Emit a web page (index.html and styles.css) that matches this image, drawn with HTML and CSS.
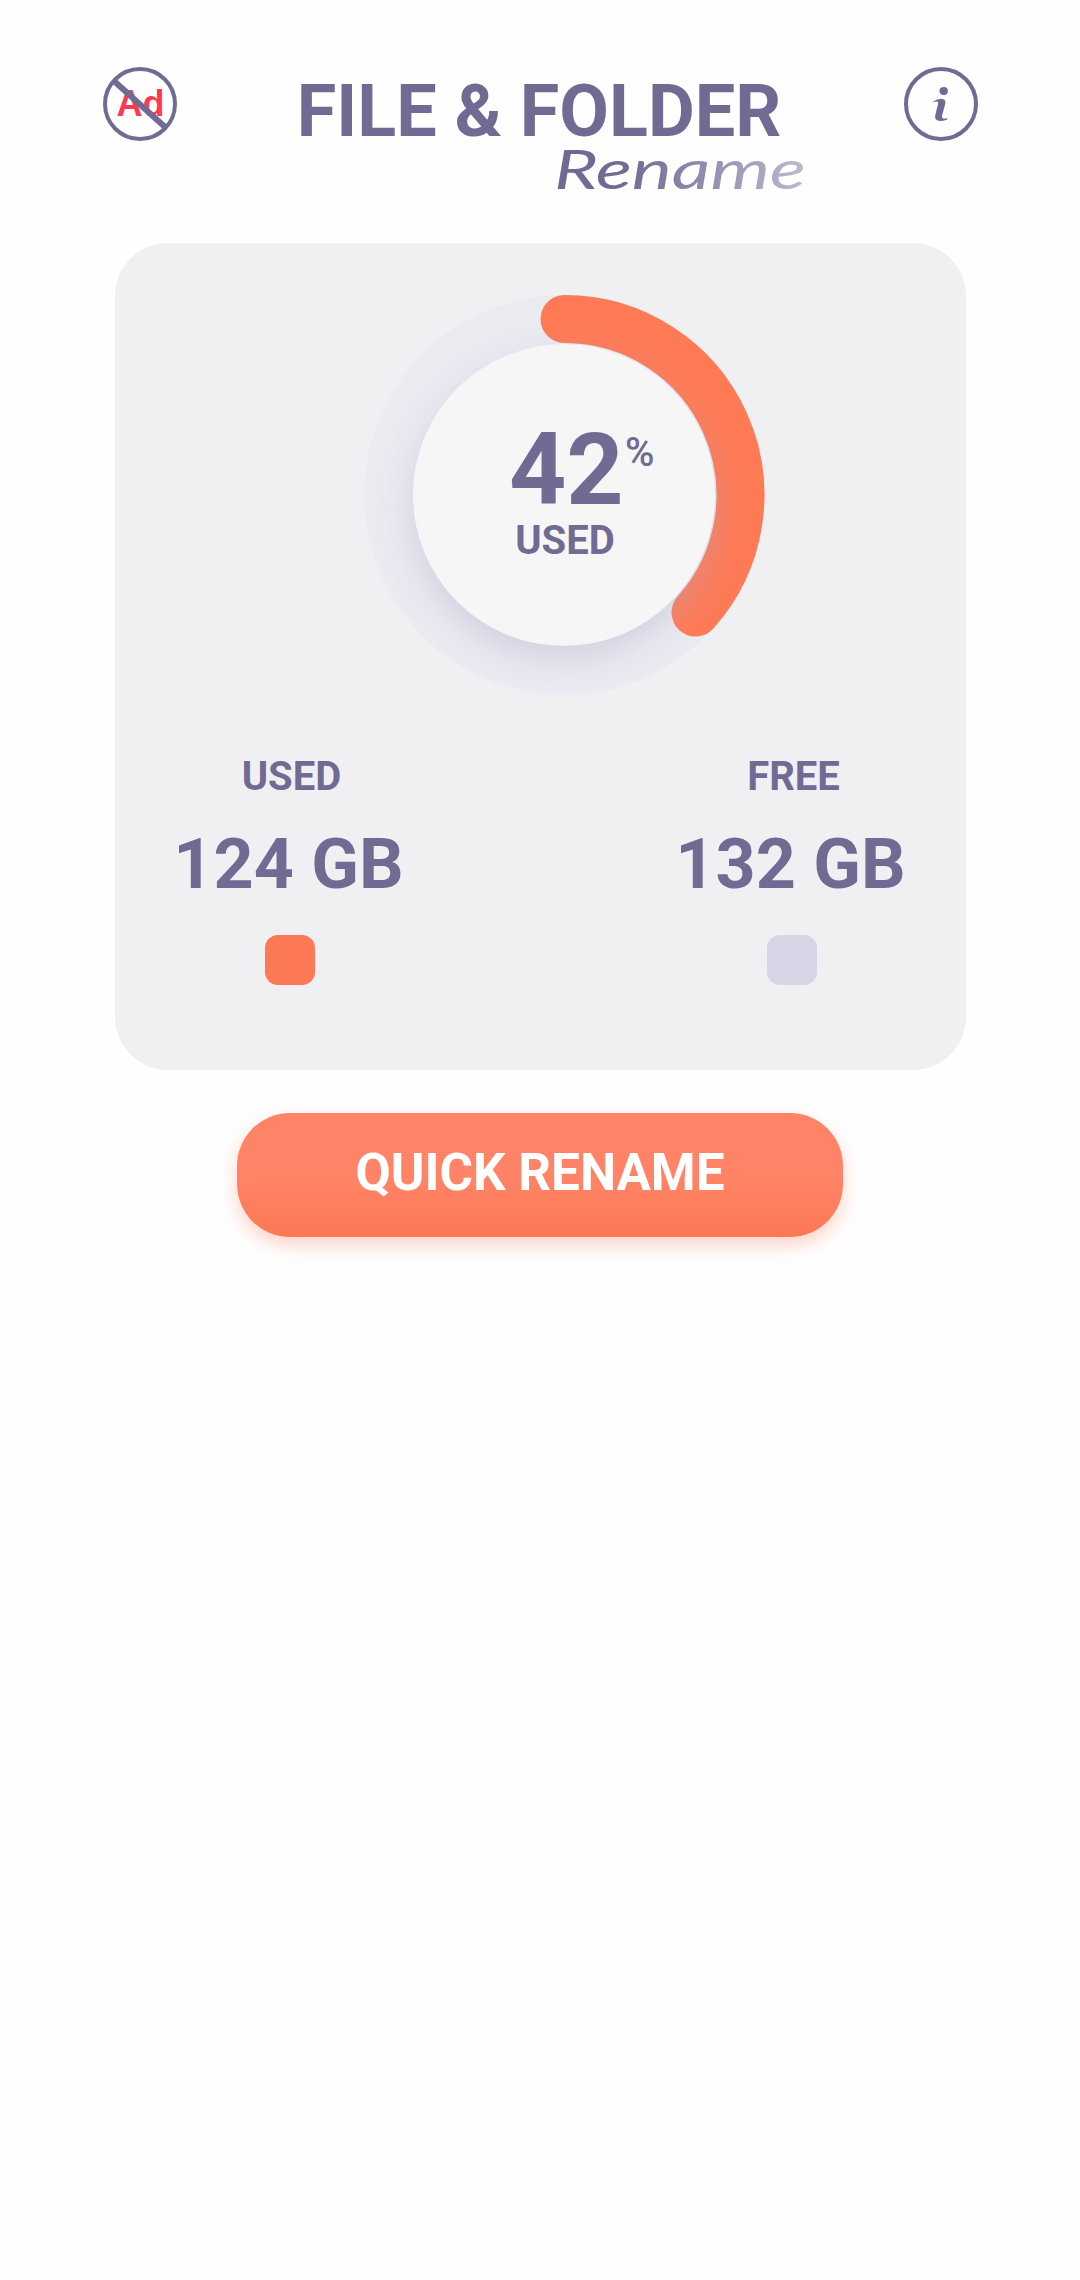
FILE: index.html
```html
<!DOCTYPE html>
<html lang="en">
<head>
<meta charset="utf-8">
<title>File &amp; Folder Rename</title>
<link rel="stylesheet" href="styles.css">
</head>
<body>
<header class="header">
  <svg class="icon" viewBox="0 0 74 74" role="img" aria-label="Remove ads">
    <circle class="icon-ring" cx="37" cy="37" r="35"/>
    <text class="ad-text" x="13.5" y="49" textLength="48">Ad</text>
    <path class="icon-slash" d="M11 14 L62 60"/>
  </svg>
  <div class="brand">
    <h1 class="brand-title">FILE &amp; FOLDER</h1>
    <svg class="brand-script" viewBox="0 0 260 48">
      <defs>
        <linearGradient id="fade" gradientUnits="userSpaceOnUse" x1="0" y1="0" x2="256" y2="0">
          <stop offset="0.3" stop-color="#716b94"/>
          <stop offset="1" stop-color="#bdb9ce"/>
        </linearGradient>
      </defs>
      <text class="script-text" x="5" y="43" textLength="252" lengthAdjust="spacingAndGlyphs" fill="url(#fade)">Rename</text>
    </svg>
  </div>
  <svg class="icon" viewBox="0 0 74 74" role="img" aria-label="Information">
    <circle class="icon-ring" cx="37" cy="37" r="35"/>
    <ellipse class="icon-fill" cx="39.7" cy="24" rx="4.2" ry="4"/>
    <path class="icon-fill" d="M29.3 34.4 Q35 31 39 32.1 Q42 33 41.2 37 L38.2 48 Q37.6 51.4 39.5 51.6 Q41.5 51.8 43.4 51 L43.2 52.4 Q39.5 54 36 54 Q30.4 53.6 31.2 48.5 L34 37 Q34.7 34.3 32.5 34.4 Q30.8 34.6 29.3 35.4 Z"/>
  </svg>
</header>

<main class="main">
  <section class="card">
    <svg class="gauge" viewBox="0 0 400 400">
      <defs>
        <clipPath id="ring-clip"><circle cx="200" cy="200" r="200"/></clipPath>
        <filter id="soft" x="-30%" y="-30%" width="160%" height="160%"><feGaussianBlur stdDeviation="19"/></filter>
      </defs>
      <circle class="gauge-track" cx="200" cy="200" r="200"/>
      <path class="gauge-arc" d="M200.5 24 A176 176 0 0 1 331.5 317.5"/>
      <g clip-path="url(#ring-clip)">
        <circle class="gauge-shadow" cx="198" cy="214" r="151" filter="url(#soft)"/>
      </g>
      <circle class="gauge-disc" cx="200" cy="200" r="151"/>
      <text class="gauge-value" x="145" y="209">42</text>
      <text class="gauge-percent" x="261" y="171">%</text>
      <text class="gauge-label" x="201" y="259">USED</text>
    </svg>
    <div class="stats">
      <div class="stat">
        <div class="stat-label">USED</div>
        <div class="stat-value">124 GB</div>
        <div class="swatch swatch-used"></div>
      </div>
      <div class="stat">
        <div class="stat-label">FREE</div>
        <div class="stat-value">132 GB</div>
        <div class="swatch swatch-free"></div>
      </div>
    </div>
  </section>
  <button class="rename-button" type="button">QUICK RENAME</button>
</main>
</body>
</html>
```

FILE: styles.css
```css
* { box-sizing: border-box; }

body {
  margin: 0;
  min-height: 2280px;
  background: #fefefe;
  color: #716b94;
  font-family: Roboto, "Liberation Sans", sans-serif;
  font-weight: 700;
}

.header {
  display: flex;
  justify-content: space-between;
  height: 243px;
  padding: 67px 102px 0 103px;
}

.icon { width: 74px; height: 74px; }
.icon-ring { fill: none; stroke: #716b94; stroke-width: 4; }
.icon-slash { fill: none; stroke: #716b94; stroke-width: 6; }
.icon-fill { fill: #716b94; }
.ad-text { fill: #ff3850; font: 700 36px "Liberation Sans", sans-serif; }

.brand {
  display: flex;
  flex-direction: column;
  align-items: center;
  width: 540px;
  padding-top: 9px;
}

.brand-title {
  margin: 0;
  padding-right: 3px;
  font-size: 72px;
  line-height: 72px;
  font-weight: 700;
  white-space: nowrap;
}

.brand-script {
  align-self: flex-end;
  width: 260px;
  height: 48px;
  margin-right: 2px;
  margin-top: -2px;
  overflow: visible;
}

.script-text { font: italic 400 54px Lato, sans-serif; }

.main {
  display: flex;
  flex-direction: column;
  align-items: center;
  gap: 43px;
}

.card {
  width: 851px;
  height: 827px;
  margin-left: 1px;
  padding-top: 52px;
  border-radius: 53px;
  background: #f0f0f3;
}

.gauge {
  display: block;
  width: 400px;
  height: 400px;
  margin-left: 249px;
  overflow: visible;
}

.gauge-track { fill: #ebecf2; }
.gauge-arc { fill: none; stroke: #ff7a55; stroke-width: 48; stroke-linecap: round; }
.gauge-shadow { fill: #aaaac6; opacity: 0.42; }
.gauge-disc { fill: #f6f6f6; }
.gauge-value { fill: #716b94; font-size: 100px; }
.gauge-percent { fill: #716b94; font-size: 40px; font-weight: 500; }
.gauge-label { fill: #716b94; font-size: 40px; text-anchor: middle; }

.stats {
  display: flex;
  justify-content: space-between;
  padding: 62px 62px 0 63px;
}

.stat {
  display: flex;
  flex-direction: column;
  align-items: center;
  width: 224px;
}

.stat-label { padding-left: 3px; font-size: 40px; line-height: 40px; }
.stat-value { margin-top: 32px; padding-right: 3px; font-size: 70px; line-height: 70px; white-space: nowrap; }

.swatch { width: 50px; height: 50px; margin-top: 36px; border-radius: 13px; }
.swatch-used { background: #fd7854; }
.swatch-free { background: #d6d5e6; }

.rename-button {
  width: 606px;
  height: 124px;
  padding: 0 0 4px;
  border: 0;
  border-radius: 53px;
  background: linear-gradient(#ff8467 50%, #fc7854);
  box-shadow: 0 8px 18px rgba(252, 120, 84, 0.32);
  color: #fff;
  font: 700 51.2px/52px Roboto, "Liberation Sans", sans-serif;
}
```
